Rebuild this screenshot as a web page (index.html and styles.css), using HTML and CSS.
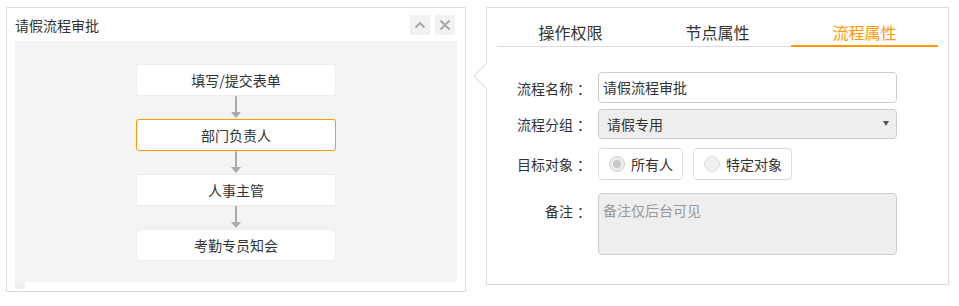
FILE: index.html
```html
<!DOCTYPE html>
<html lang="zh-CN">
<head>
<meta charset="utf-8">
<title>请假流程审批</title>
<link rel="stylesheet" href="styles.css">
</head>
<body>
<div class="page">
  <section class="flow-panel">
    <header class="flow-head">
      <span class="flow-title">请假流程审批</span>
      <div class="head-btns">
        <button class="head-btn" type="button" aria-label="收起">
          <svg width="20" height="20" viewBox="0 0 20 20"><polyline points="5.5,12.5 10,8 14.5,12.5" fill="none" stroke="#a6a6a6" stroke-width="1.8"/></svg>
        </button>
        <button class="head-btn" type="button" aria-label="关闭">
          <svg width="20" height="20" viewBox="0 0 20 20"><path d="M5.5 5.5 L14.5 14.5 M14.5 5.5 L5.5 14.5" fill="none" stroke="#a6a6a6" stroke-width="1.8"/></svg>
        </button>
      </div>
    </header>
    <div class="canvas">
      <div class="node">填写/提交表单</div>
      <div class="arrow"></div>
      <div class="node node-active">部门负责人</div>
      <div class="arrow"></div>
      <div class="node">人事主管</div>
      <div class="arrow"></div>
      <div class="node">考勤专员知会</div>
    </div>
    <div class="scroll-bit"></div>
  </section>

  <section class="prop-panel">
    <div class="pointer"></div>
    <nav class="tabs">
      <div class="tab">操作权限</div>
      <div class="tab">节点属性</div>
      <div class="tab tab-active">流程属性</div>
    </nav>
    <form class="form">
      <div class="row row-name">
        <label class="label">流程名称<span class="colon">：</span></label>
        <div class="input">请假流程审批</div>
      </div>
      <div class="row row-group">
        <label class="label">流程分组<span class="colon">：</span></label>
        <div class="select"><span>请假专用</span><span class="caret"></span></div>
      </div>
      <div class="row row-target">
        <label class="label">目标对象<span class="colon">：</span></label>
        <div class="radios">
          <div class="radio radio-on"><span class="dot"></span>所有人</div>
          <div class="radio"><span class="dot"></span>特定对象</div>
        </div>
      </div>
      <div class="row row-note">
        <label class="label label-top">备注<span class="colon">：</span></label>
        <div class="textarea">备注仅后台可见</div>
      </div>
    </form>
  </section>
</div>
</body>
</html>
```

FILE: styles.css
```css
* { box-sizing: border-box; }
html, body { margin: 0; padding: 0; background: #fff; }
body {
  font-family: "Noto Sans CJK SC", "Noto Sans", "Liberation Sans", sans-serif;
  font-size: 14px;
  color: #333;
}
.page {
  display: flex;
  align-items: flex-start;
  gap: 20px;
  padding: 7px 0 0 6px;
}

/* left panel */
.flow-panel {
  width: 460px;
  height: 285px;
  border: 1px solid #dcdcdc;
  background: #fff;
  display: flex;
  flex-direction: column;
}
.flow-head {
  height: 33px;
  display: flex;
  align-items: center;
  justify-content: space-between;
  padding: 0 10px 0 8px;
}
.flow-title { font-size: 14px; line-height: 20px; color: #333; }
.head-btns { display: flex; gap: 5px; }
.head-btn {
  width: 20px; height: 20px;
  padding: 0; border: 0;
  background: #f2f2f2;
  display: flex; align-items: center; justify-content: center;
}
.canvas {
  margin: 0 8px;
  height: 241px;
  background: #f4f4f4;
  padding-top: 23px;
  display: flex;
  flex-direction: column;
  align-items: center;
}
.scroll-bit {
  margin-left: 8px;
  width: 10px;
  height: 7px;
  background: #f0f0f0;
}
.node {
  width: 200px;
  height: 32px;
  background: #fff;
  border: 1px solid #ececec;
  border-radius: 3px;
  display: flex; align-items: center; justify-content: center;
  font-size: 14px;
  line-height: 20px;
  color: #333;
}
.node-active { border-color: #ff9900; }
.arrow {
  position: relative;
  width: 10px;
  height: 23px;
}
.arrow::before {
  content: "";
  position: absolute;
  left: 4px; top: 0;
  width: 2px; height: 18px;
  background: #aaa;
  border-radius: 1px;
}
.arrow::after {
  content: "";
  position: absolute;
  left: 0; bottom: 1px;
  border-left: 5px solid transparent;
  border-right: 5px solid transparent;
  border-top: 6px solid #aaa;
}

/* right panel */
.prop-panel {
  position: relative;
  width: 463px;
  height: 278px;
  border: 1px solid #dcdcdc;
  background: #fff;
}
.pointer {
  position: absolute;
  left: -10px;
  top: 59px;
  width: 18px;
  height: 18px;
  background: #fff;
  border-left: 1px solid #dcdcdc;
  border-bottom: 1px solid #dcdcdc;
  transform: rotate(45deg);
}
.tabs {
  position: relative;
  margin: 12px 10px 0;
  display: flex;
  border-bottom: 1px solid #dcdcdc;
}
.tab {
  flex: 1;
  text-align: center;
  font-size: 16px;
  line-height: 25px;
  color: #333;
  border-bottom: 2px solid transparent;
  margin-bottom: -1px;
}
.tab-active { color: #ff9900; border-bottom-color: #ff9900; }

.form { position: relative; padding-top: 25px; }
.row { display: flex; align-items: center; }
.label {
  width: 100px;
  margin-right: 11px;
  text-align: right;
  font-size: 14px;
  line-height: 20px;
  color: #333;
  white-space: nowrap;
}
.colon {
  display: inline-block;
  width: 14px;
  text-indent: 4px;
  text-align: left;
  overflow: visible;
  vertical-align: top;
}
.label-top { align-self: flex-start; padding-top: 8px; }
.input {
  width: 299px;
  height: 31px;
  border: 1px solid #ccc;
  border-radius: 4px;
  padding: 0 4px;
  line-height: 29px;
  color: #333;
}
.row-group { margin-top: 6px; }
.select {
  width: 299px;
  height: 30px;
  border: 1px solid #ccc;
  border-radius: 4px;
  background: #eee;
  padding: 0 7px 0 8px;
  display: flex; align-items: center; justify-content: space-between;
  line-height: 28px;
}
.caret {
  width: 0; height: 0;
  border-left: 3px solid transparent;
  border-right: 3px solid transparent;
  border-top: 5px solid #555;
  margin-top: -2px;
}
.row-target { margin-top: 9px; }
.radios { display: flex; gap: 10px; }
.radio {
  height: 32px;
  border: 1px solid #ddd;
  border-radius: 4px;
  padding: 0 9px 0 10px;
  display: flex; align-items: center;
  line-height: 20px;
}
.dot {
  width: 16px; height: 16px;
  border-radius: 50%;
  border: 1px solid #ddd;
  background: #f0f0f0;
  margin-right: 6px;
  position: relative;
}
.radio-on .dot { background: #ececec; border-color: #d0d0d0; }
.radio-on .dot::after {
  content: "";
  position: absolute;
  left: 3px; top: 3px;
  width: 8px; height: 8px;
  border-radius: 50%;
  background: #c8c8c8;
}
.row-note { margin-top: 13px; }
.textarea {
  width: 299px;
  height: 62px;
  border: 1px solid #ccc;
  border-radius: 4px;
  background: #eee;
  padding: 6px 4px;
  line-height: 20px;
  color: #999;
}
```
